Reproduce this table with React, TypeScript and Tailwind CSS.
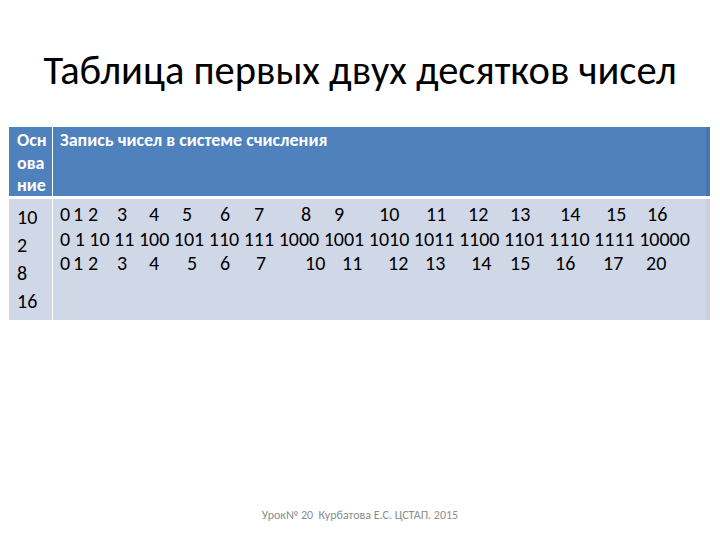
import React from "react";

type Item = [string, number];

const START = 61;

const row1: Item[] = [
  ["0", 61], ["1", 74], ["2", 89], ["3", 118], ["4", 150], ["5", 183], ["6", 221], ["7", 255],
  ["8", 302], ["9", 335], ["10", 380], ["11", 427], ["12", 469], ["13", 511], ["14", 561], ["15", 607], ["16", 648],
];
const row3: Item[] = [
  ["0", 61], ["1", 74], ["2", 89], ["3", 118], ["4", 150], ["5", 188], ["6", 221], ["7", 257],
  ["10", 306], ["11", 343], ["12", 389], ["13", 426], ["14", 472], ["15", 511], ["16", 556], ["17", 604], ["20", 647],
];

function NumLine({ items }: { items: Item[] }) {
  return (
    <div className="flex h-[24.5px] items-center whitespace-nowrap">
      {items.map(([t, x], i) => {
        const next = i < items.length - 1 ? items[i + 1][1] : null;
        const left = i === 0 ? x - START : 0;
        return (
          <span
            key={i}
            className="shrink-0"
            style={{ marginLeft: left, width: next !== null ? next - x : undefined }}
          >
            {t}
          </span>
        );
      })}
    </div>
  );
}

export default function App() {
  return (
    <div
      className="w-[720px] h-[540px] bg-white flex flex-col text-black overflow-hidden"
      style={{ fontFamily: "Carlito, 'Open Sans', 'Noto Sans', sans-serif" }}
    >
      <div className="h-[127px] flex justify-center pt-[44px]">
        <h1 className="text-[40.5px] leading-[52px] font-normal">
          Таблица первых двух десятков чисел
        </h1>
      </div>

      <div className="ml-[9px] w-[701px] flex flex-col">
        <div className="flex h-[69px] bg-[#4f81bd] text-white font-bold text-[18px] leading-[22.5px]">
          <div className="w-[44px] pl-[8px] pt-[2px] border-r-[1.5px] border-white">
            <div>Осн</div>
            <div>ова</div>
            <div>ние</div>
          </div>
          <div className="flex-1 pl-[7px] pt-[2px]">Запись чисел в системе счисления</div>
          <div className="w-[4px] bg-[#4874b0]" />
        </div>
        <div className="h-[3px] bg-white" />
        <div className="flex h-[121px] bg-[#d0d8e8] text-[20px]">
          <div className="w-[44px] pl-[8px] pt-[4px] leading-[28px] border-r-[1.5px] border-white">
            <div>10</div>
            <div>2</div>
            <div>8</div>
            <div>16</div>
          </div>
          <div className="flex-1 pt-[3px] pl-[7px]">
            <NumLine items={row1} />
            <div className="flex h-[24.5px] items-center whitespace-pre">
              0 1 10 11 100 101 110 111 1000 1001 1010 1011 1100 1101 1110 1111 10000
            </div>
            <NumLine items={row3} />
          </div>
          <div className="w-[4px] bg-[#c7d0df]" />
        </div>
      </div>

      <div className="flex-1" />
      <div className="h-[16px] mb-[17px] flex justify-center items-center text-[12px] leading-[16px] text-[#8c8c8c]">
        Урок№ 20&nbsp; Курбатова Е.С. ЦСТАП. 2015
      </div>
    </div>
  );
}
